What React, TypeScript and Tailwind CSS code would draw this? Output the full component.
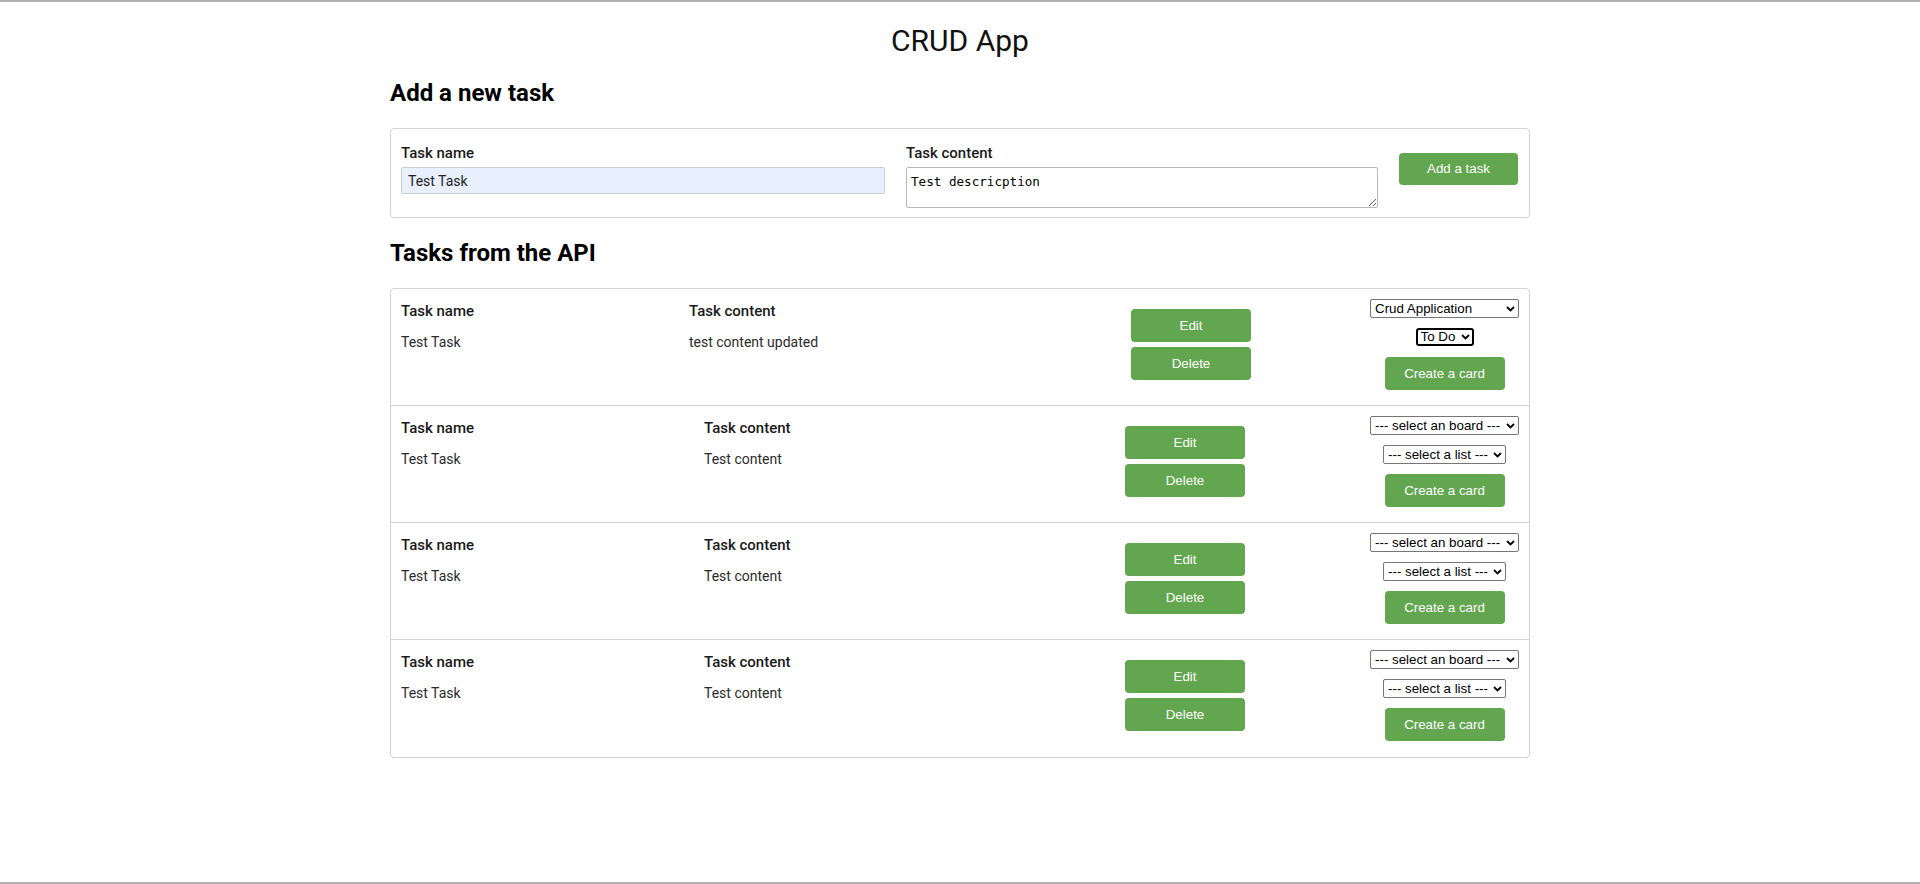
import React from 'react';

type Task = {
  name: string;
  content: string;
  board: string;
  list: string;
  nameW: string;
  contentW: string;
  listW: string;
  focused?: boolean;
};

const tasks: Task[] = [
  {
    name: 'Test Task',
    content: 'test content updated',
    board: 'Crud Application',
    list: 'To Do',
    nameW: 'w-[288px]',
    contentW: 'w-[442px]',
    listW: 'w-[58px]',
    focused: true,
  },
  {
    name: 'Test Task',
    content: 'Test content',
    board: '--- select an board ---',
    list: '--- select a list ---',
    nameW: 'w-[303px]',
    contentW: 'w-[421px]',
    listW: 'w-[123px]',
  },
  {
    name: 'Test Task',
    content: 'Test content',
    board: '--- select an board ---',
    list: '--- select a list ---',
    nameW: 'w-[303px]',
    contentW: 'w-[421px]',
    listW: 'w-[123px]',
  },
  {
    name: 'Test Task',
    content: 'Test content',
    board: '--- select an board ---',
    list: '--- select a list ---',
    nameW: 'w-[303px]',
    contentW: 'w-[421px]',
    listW: 'w-[123px]',
  },
];

const Chevron = () => (
  <svg width="9" height="6" viewBox="0 0 9 6" className="pointer-events-none absolute right-[4px] top-1/2 -translate-y-1/2">
    <path d="M1 1l3.5 3.5L8 1" fill="none" stroke="#000" strokeWidth="1.8" />
  </svg>
);

const FakeSelect: React.FC<{ value: string; width: string; focused?: boolean }> = ({ value, width, focused }) => (
  <div className={`relative ${width}`}>
    <select
      defaultValue={value}
      className={
        focused
          ? 'block w-full h-[18px] appearance-none rounded-[3px] border-2 border-black bg-white pl-[3px] pr-[14px] text-[13.33px] leading-[14px] text-black font-["Liberation_Sans",Arial,sans-serif] outline-none'
          : 'block w-full h-[19px] appearance-none rounded-[2px] border border-[#767676] bg-white pl-[4px] pr-[14px] text-[13.33px] leading-[17px] text-black font-["Liberation_Sans",Arial,sans-serif] outline-none'
      }
    >
      <option value={value}>{value}</option>
    </select>
    <Chevron />
  </div>
);

const GreenButton: React.FC<{ children: React.ReactNode; className?: string }> = ({ children, className }) => (
  <button
    className={`block w-[120px] h-[33px] rounded-[4px] bg-[#62a64f] text-white text-[13.33px] font-["Liberation_Sans",Arial,sans-serif] ${className ?? ''}`}
  >
    {children}
  </button>
);

const TaskRow: React.FC<{ task: Task; last: boolean }> = ({ task, last }) => (
  <div className={`flex h-[117px] px-[10px] ${last ? '' : 'border-b border-[#d2d2d2]'}`}>
    <div className={`${task.nameW} pt-[12px]`}>
      <div className="text-[15px] leading-[20px] font-medium text-[#1a1a1a]">Task name</div>
      <div className="mt-[11px] text-[14px] leading-[20px] text-[#2b2b2b]">{task.name}</div>
    </div>
    <div className={`${task.contentW} pt-[12px]`}>
      <div className="text-[15px] leading-[20px] font-medium text-[#1a1a1a]">Task content</div>
      <div className="mt-[11px] text-[14px] leading-[20px] text-[#2b2b2b]">{task.content}</div>
    </div>
    <div className="pt-[20px] flex flex-col gap-[5px]">
      <GreenButton>Edit</GreenButton>
      <GreenButton>Delete</GreenButton>
    </div>
    <div className="ml-auto w-[149px] pt-[10px] flex flex-col items-center">
      <FakeSelect value={task.board} width="w-[149px]" />
      <div className="mt-[10px]">
        <FakeSelect value={task.list} width={task.listW} focused={task.focused} />
      </div>
      <GreenButton className={task.focused ? 'mt-[11px]' : 'mt-[10px]'}>Create a card</GreenButton>
    </div>
  </div>
);

export default function App() {
  return (
    <div className="min-h-[884px] bg-white flex flex-col font-['Roboto','Liberation_Sans',sans-serif] text-[#212529]">
      <div className="h-[2px] bg-[#b0b0b0]" />
      <h1 className="mt-[21px] text-center text-[30px] leading-[36px] font-normal text-[#111]">CRUD App</h1>

      <div className="w-[1140px] mx-auto">
        <h2 className="mt-[19px] text-[24px] leading-[30px] font-bold text-black">Add a new task</h2>

        <div className="mt-[20px] h-[90px] rounded-[4px] border border-[#d2d2d2] px-[10px] pt-[14px] flex items-start">
          <div className="w-[484px]">
            <label className="block text-[15px] leading-[20px] font-medium text-[#1a1a1a]">Task name</label>
            <input
              defaultValue="Test Task"
              className="mt-[4px] block w-full h-[27px] rounded-[2px] border border-[#c9ccd1] bg-[#e8f0fe] px-[6px] text-[14px] text-[#222] outline-none"
            />
          </div>
          <div className="ml-[21px] w-[472px]">
            <label className="block text-[15px] leading-[20px] font-medium text-[#1a1a1a]">Task content</label>
            <textarea
              defaultValue="Test descricption"
              className="mt-[4px] block w-full h-[41px] rounded-[2px] border border-[#b8b8b8] bg-white px-[4px] pt-[6px] pb-[2px] text-[12.6px] leading-[15px] text-black font-['DejaVu_Sans_Mono','Liberation_Mono',monospace] outline-none resize"
            />
          </div>
          <GreenButton className="ml-[21px] mt-[10px] !w-[119px] !h-[32px]">Add a task</GreenButton>
        </div>

        <h2 className="mt-[20px] text-[24px] leading-[30px] font-bold text-black">Tasks from the API</h2>

        <div className="mt-[20px] rounded-[4px] border border-[#d2d2d2]">
          {tasks.map((t, i) => (
            <TaskRow key={i} task={t} last={i === tasks.length - 1} />
          ))}
        </div>
      </div>

      <div className="flex-1" />
      <div className="h-[2px] bg-[#b0b0b0]" />
    </div>
  );
}
